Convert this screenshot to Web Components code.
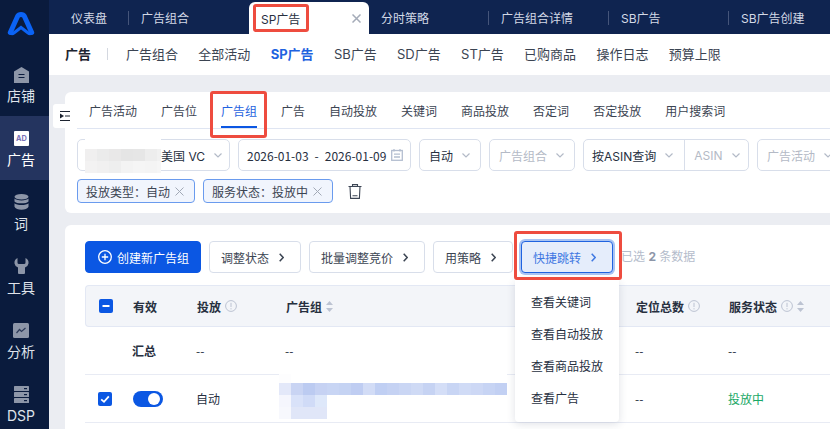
<!DOCTYPE html>
<html lang="zh"><head><meta charset="utf-8"><title>SP广告</title>
<style>
html,body{margin:0;padding:0;width:830px;height:429px;overflow:hidden;background:#ebedf2;font-family:Inter,"Noto Sans CJK SC",sans-serif;font-size:12px;color:#27303f}
</style></head><body>
<x-app>
  <x-sidebar slot="side">
    <svg slot="logo" width="28" height="24" viewBox="0 0 28 24"><path d="M3.300 20.500 10.600 4.300Q11.600 2.500 14 2.500T17.400 4.300L24.700 20.500" fill="none" stroke="#0b63f5" stroke-width="5" stroke-linecap="round"/><path d="M3.300 21Q5 22.500 7.500 20.500L14 15.500 20.500 20.500Q23 22.500 24.700 21" fill="none" stroke="#0b63f5" stroke-width="3"/></svg>
    <x-side-item label="店铺"><svg width="15" height="16" viewBox="0 0 15 16"><path d="M7.500 0 15 4.500V16H0V4.500Z" fill="#8d96a8"/><path d="M4.500 7.500h6M4.500 10.500h6" stroke="#0a1b3d" stroke-width="1.200"/></svg></x-side-item>
    <x-side-item label="广告" active><svg width="15" height="15" viewBox="0 0 15 15"><rect width="15" height="15" rx="1" fill="#fff"/><text x="7.500" y="10.400" font-family="Inter,sans-serif" font-size="7.400" font-weight="700" text-anchor="middle" fill="#7a72b8">AD</text></svg></x-side-item>
    <x-side-item label="词"><svg style="margin-top:-1px" width="15" height="16" viewBox="0 0 15 16"><g fill="#8d96a8"><ellipse cx="7.500" cy="2.800" rx="7" ry="2.800"/><path d="M.5 4.600C2 7 13 7 14.500 4.600V7.400C13 10 2 10 .5 7.400Z"/><path d="M.5 9.200C2 11.600 13 11.600 14.500 9.200V12.800C13 16.600 2 16.600 .5 12.800Z"/></g></svg></x-side-item>
    <x-side-item label="工具"><svg style="margin-top:-1px" width="15" height="16" viewBox="0 0 15 16"><path d="M3.500 0 V4.500 Q3.500 6 5 6 H10 Q11.500 6 11.500 4.500 V0 Q15 1.500 14.500 5.500 Q14 8.500 11 9.500 V15 Q11 16 10 16 H5 Q4 16 4 15 V9.500 Q1 8.500 .5 5.500 Q0 1.500 3.500 0Z" fill="#8d96a8"/></svg></x-side-item>
    <x-side-item label="分析"><svg width="16" height="15" viewBox="0 0 16 15"><rect width="16" height="15" rx="1.500" fill="#8d96a8"/><path d="M3.500 10 6.500 6.500 8.500 8.500 12.500 5" fill="none" stroke="#2c3a58" stroke-width="1.200"/></svg></x-side-item>
    <x-side-item label="DSP"><svg style="margin-top:-1px" width="15" height="17" viewBox="0 0 15 17"><g fill="#8d96a8"><rect width="15" height="5" rx=".6"/><rect y="6" width="15" height="5" rx=".6"/><rect y="12" width="15" height="5" rx=".6"/></g><g fill="#0a1b3d"><rect x="10" y="2" width="3" height="1.200"/><rect x="10" y="8" width="3" height="1.200"/><rect x="10" y="14" width="3" height="1.200"/></g></svg></x-side-item>
  </x-sidebar>
  <x-tabbar slot="tabs">
    <x-tab w="70" divider>仪表盘</x-tab>
    <x-tab w="120">广告组合</x-tab>
    <x-tab w="120" active>SP广告</x-tab>
    <x-tab w="120" divider>分时策略</x-tab>
    <x-tab w="120" divider>广告组合详情</x-tab>
    <x-tab w="120" divider>SB广告</x-tab>
    <x-tab w="120">SB广告创建</x-tab>
  </x-tabbar>
  <x-subnav slot="sub">
    <x-sub-link strong>广告</x-sub-link><x-sep></x-sep>
    <x-sub-link>广告组合</x-sub-link><x-sub-link>全部活动</x-sub-link><x-sub-link active>SP广告</x-sub-link><x-sub-link>SB广告</x-sub-link><x-sub-link>SD广告</x-sub-link><x-sub-link>ST广告</x-sub-link><x-sub-link>已购商品</x-sub-link><x-sub-link>操作日志</x-sub-link><x-sub-link>预算上限</x-sub-link>
  </x-subnav>
  <x-content slot="content">
    <x-card pad="0 12px 10px 12px">
      <x-line-tabs>
        <x-line-tab>广告活动</x-line-tab><x-line-tab>广告位</x-line-tab><x-line-tab active>广告组</x-line-tab><x-line-tab>广告</x-line-tab><x-line-tab>自动投放</x-line-tab><x-line-tab>关键词</x-line-tab><x-line-tab>商品投放</x-line-tab><x-line-tab>否定词</x-line-tab><x-line-tab>否定投放</x-line-tab><x-line-tab>用户搜索词</x-line-tab>
      </x-line-tabs>
      <x-row-flex style="margin-top:10px">
        <x-select w="153" pad="7"><x-mosaic size="12" clip="76" cells="fff,fff,fff,fff,fff,fff,fff;f0efef,ebebeb,e9e8e8,e5e5e5,e6e6e6,ededed,f1f1f1;f3f2f2,f1f0f0,eeeeee,f3f3f3,f5f5f5,f4f4f4,f6f6f6"></x-mosaic><span>美国 VC</span></x-select>
        <x-select w="173" kind="date"><x-date-range><span>2026-01-03</span><span>-</span><span>2026-01-09</span></x-date-range></x-select>
        <x-select w="62">自动</x-select>
        <x-select w="86" muted>广告组合</x-select>
        <x-select w="166" kind="split"><span>按ASIN查询</span><span slot="second">ASIN</span></x-select>
        <x-select w="110" muted>广告活动</x-select>
      </x-row-flex>
      <x-row-flex style="margin-top:8px">
        <x-tag w="118">投放类型：自动</x-tag>
        <x-tag w="130">服务状态：投放中</x-tag>
        <svg style="margin-left:7px;margin-top:5px" width="14" height="15" viewBox="0 0 14 15" fill="none" stroke="#3c4554" stroke-width="1.100"><path d="M.5 2.500H13.500M4.500 2.500V.6H9.500V2.500M2 2.500 2.600 14.400H11.400L12 2.500M4.500 11.800H9.500"/></svg>
      </x-row-flex>
    </x-card>
    <x-card pad="16px 0 0 20px" style="margin-top:12px;height:240px">
      <x-row-flex>
        <x-btn primary w="116"><svg width="14" height="14" viewBox="0 0 14 14" fill="none" stroke="#fff" stroke-width="1.300" style="margin-right:5px"><circle cx="7" cy="7" r="6.300"/><path d="M3.800 7h6.400M7 3.800v6.400"/></svg>创建新广告组</x-btn>
        <x-btn w="92" arrow>调整状态</x-btn>
        <x-btn w="116" arrow>批量调整竞价</x-btn>
        <x-btn w="80" arrow>用策略</x-btn>
        <x-btn w="92" arrow focus>快捷跳转</x-btn>
        <span style="margin:8px 0 0 0;color:#b4bccb;line-height:16px">已选 <b style="color:#8d96a8">2</b> 条数据</span>
      </x-row-flex>
      <x-grid-table>
        <x-table-row head>
          <x-check state="minus"></x-check><b>有效</b><b>投放<x-info></x-info></b><b>广告组<x-sort></x-sort></b><b>定位总数<x-info></x-info></b><b>服务状态<x-info></x-info><x-sort></x-sort></b>
        </x-table-row>
        <x-table-row h="48">
          <span></span><b>汇总</b><x-dash></x-dash><x-dash></x-dash><x-dash></x-dash><x-dash></x-dash>
        </x-table-row>
        <x-table-row h="48">
          <x-check state="on"></x-check><x-switch></x-switch><span>自动</span><span></span><x-dash></x-dash><span style="color:#19a866">投放中</span>
          <x-mosaic slot="over" size="12" first="9" cells="fdfdfe,fff,fff,fff,fff,fff,fff,fff,fff,fff,fff,fff,fff,fff,fff,fff,fff,fff,fff;e3e8f9,c9d4f3,bccbf1,c6d2f3,c8d5f4,c5d3f3,bfcdf2,d2dcf6,c0cff3,c5d2f3,cad6f4,cfdaf5,c6d3f3,d4def7,c8d5f4,d0dbf6,cdd8f5,c7d4f4,c2d0f3;f5f6fd,d9e2f9,d0dbf7,dee8fa,fff,fff,fff,fff,fff,fff,fff,fff,fff,fff,fff,fff,fff,fff,fff;f7f8fd,e0e6f8,e0e6f8,e0e6f8,fff,fff,fff,fff,fff,fff,fff,fff,fff,fff,fff,fff,fff,fff,fff"></x-mosaic>
        </x-table-row>
      </x-grid-table>
      <x-menu>
        <x-menu-item>查看关键词</x-menu-item><x-menu-item>查看自动投放</x-menu-item><x-menu-item>查看商品投放</x-menu-item><x-menu-item>查看广告</x-menu-item>
      </x-menu>
    </x-card>
    <x-collapse></x-collapse>
  </x-content>
  <x-mark slot="marks" box="253,4,56,28"></x-mark>
  <x-mark slot="marks" box="210,91,57,47"></x-mark>
  <x-mark slot="marks" box="514,231,108,49"></x-mark>
</x-app>
<script>
function def(name,html,init){
  customElements.define(name,class extends HTMLElement{
    constructor(){super();this.attachShadow({mode:'open'}).innerHTML=typeof html==='function'?html(this):html;}
    connectedCallback(){if(init)init(this,this.shadowRoot);}
  });
}
const chev=c=>`<svg width="8" height="5" viewBox="0 0 8 5" fill="none" stroke="${c}" stroke-width="1.200"><path d="M.5.5 4 4 7.500.5"/></svg>`;
const arrow=c=>`<svg width="5" height="9" viewBox="0 0 5 9" fill="none" stroke="${c}" stroke-width="1.500"><path d="M.7.7 4.200 4.500.7 8.300"/></svg>`;
def('x-app',`<style>:host{display:grid;grid-template-columns:49px 781px;grid-template-rows:34px 41px 354px;width:830px;height:429px;position:relative;overflow:hidden}
::slotted([slot=side]){grid-row:1/4}
::slotted([slot=marks]){position:absolute}</style>
<slot name="side"></slot><slot name="tabs"></slot><slot name="sub"></slot><slot name="content"></slot><slot name="marks"></slot>`);
def('x-sidebar',`<style>:host{display:flex;flex-direction:column;background:#0a1b3d;height:429px;overflow:hidden}
.l{height:52px;flex:none;display:flex;justify-content:center;padding:12px 7px 0 0;box-sizing:border-box}</style>
<div class="l"><slot name="logo"></slot></div><slot></slot>`);
def('x-side-item',h=>`<style>:host{display:flex;flex-direction:column;align-items:center;height:64px;box-sizing:border-box;padding:15px 7px 0 0;flex:none;color:#dfe3ea;font-size:14px}
:host([active]){background:#24345f;color:#fff}
.i{height:17px;display:flex}
.t{line-height:20px;margin-top:2px}</style><div class="i"><slot></slot></div><div class="t">${h.getAttribute('label')}</div>`);
def('x-tabbar',`<style>:host{display:flex;background:#0f2450;height:34px;padding-left:10px;overflow:hidden}</style><slot></slot>`);
def('x-tab',h=>`<style>:host{display:flex;align-items:center;box-sizing:border-box;width:${h.getAttribute('w')}px;padding:0 12px;height:34px;color:#d3d9e6;font-size:12px;position:relative;flex:none}
:host([divider])::after{content:"";position:absolute;right:0;top:11px;height:14px;width:1px;background:#45557a}
:host([active]){background:#fff;color:#27303f;border-radius:6px 6px 0 0;height:32px;margin-top:2px;padding-right:8px}
.x{display:none;margin-left:auto}
:host([active]) .x{display:block}</style><slot></slot><svg class="x" width="9" height="9" viewBox="0 0 9 9" stroke="#a4abb8" stroke-width="1.500"><path d="M.5.5l8 8M8.500.5l-8 8"/></svg>`);
def('x-subnav',`<style>:host{display:flex;align-items:center;gap:20.300px;background:#fff;height:41px;padding:0 0 2px 16px;box-sizing:border-box;overflow:hidden}</style><slot></slot>`);
def('x-sub-link',`<style>:host{font-size:13px;color:#3b4452;white-space:nowrap}
:host([strong]){font-weight:700;color:#1d2430}
:host([active]){font-weight:700;color:#1f63e0}</style><slot></slot>`);
def('x-sep',`<style>:host{display:block;width:1px;height:12px;background:#d4d8e0;margin:0 -2.300px 0 -4.300px}</style>`);
def('x-content',`<style>:host{display:block;padding:17px 0 0 16px;position:relative;overflow:hidden;background:#ebedf2;height:354px;box-sizing:border-box}
::slotted(x-collapse){position:absolute;left:4px;top:29px}</style><slot></slot>`);
def('x-card',h=>`<style>:host{display:block;background:#fff;border-radius:6px 0 0 6px;padding:${h.getAttribute('pad')};position:relative;width:765px;overflow:hidden;box-sizing:border-box}
::slotted(x-menu){position:absolute;left:450px;top:55px}</style><slot></slot>`);
def('x-line-tabs',`<style>:host{display:flex;gap:24px;height:36px;padding-left:12px;border-bottom:1px solid #dfe5f2;margin-right:-12px;width:800px}</style><slot></slot>`);
def('x-line-tab',`<style>:host{display:flex;align-items:center;height:36px;font-size:12px;color:#3b4452;box-sizing:border-box;white-space:nowrap;padding-top:1px}
:host([active]){color:#1f63e0;border-bottom:2px solid #0b57e3;padding-top:3px}</style><slot></slot>`);
def('x-row-flex',`<style>:host{display:flex;gap:8px;width:830px}</style><slot></slot>`);
def('x-date-range',`<style>:host{display:flex;gap:6px;width:137px;justify-content:space-between;font-family:"Noto Sans CJK SC",sans-serif;font-size:12px;color:#27303f}</style><slot></slot>`);
def('x-select',h=>{const k=h.getAttribute('kind');const w=h.getAttribute('w');
 const icon=k==='date'?`<svg style="margin-left:auto" width="12" height="12" viewBox="0 0 12 12" fill="none" stroke="#b4bed0" stroke-width="1.300"><rect x=".7" y="1.500" width="10.600" height="9.800"/><path d="M3 0v2.500M9 0v2.500M3 5.200h6M3 8h6"/></svg>`:`<span class="c">${chev('#b3bac7')}</span>`;
 const second=k==='split'?`<span class="s"><slot name="second"></slot><span class="c">${chev('#b3bac7')}</span></span>`:'';
 const left=k==='date'?'0 7px 0 8px':k==='split'?'0 9px 0 8px':h.hasAttribute('pad')?'0 7px':'0 9px';
 return `<style>:host{display:flex;align-items:center;box-sizing:border-box;flex:none;width:${w}px;height:32px;border:1px solid #d8deea;border-radius:5px;padding:${left};font-size:12px;color:#27303f;white-space:nowrap;background:#fff}
:host([muted]){color:#b4bac6}
.c{margin-left:9px;display:flex}
.s{display:flex;align-items:center;align-self:stretch;margin-left:11px;padding-left:9px;border-left:1px solid #d8deea;color:#b4bac6}</style><slot></slot>${icon}${second}`;});
def('x-tag',h=>`<style>:host{display:flex;align-items:center;box-sizing:border-box;width:${h.getAttribute('w')}px;height:24px;border:1px solid #6a9bee;border-radius:4px;background:#f1f5fd;padding-left:8px;font-size:12px;color:#3b4452;white-space:nowrap}
svg{margin-left:5px}</style><slot></slot><svg width="9" height="9" viewBox="0 0 9 9" stroke="#a2a9b6" stroke-width="1"><path d="M.5.5l8 8M8.500.5l-8 8"/></svg>`);
def('x-btn',h=>`<style>:host{display:flex;align-items:center;box-sizing:border-box;width:${h.getAttribute('w')}px;height:32px;flex:none;border:1px solid #d8deea;border-radius:4px;background:#fff;padding-left:11px;font-size:12px;color:#3b4452;white-space:nowrap}
:host([primary]){background:#0b57e3;border-color:#0b57e3;color:#fff;padding-left:12px}
:host([focus]){background:#e5edfb;border-color:#1f63e0;color:#3f78e2;box-shadow:0 0 0 2px #a9c4f3}
.a{margin-left:10px;display:flex}</style><slot></slot>${h.hasAttribute('arrow')?`<span class="a">${arrow(h.hasAttribute('focus')?'#3f78e2':'#3b4452')}</span>`:''}`);
def('x-grid-table',`<style>:host{display:block;margin-top:12px;width:760px}</style><slot></slot>`);
def('x-table-row',h=>`<style>:host{display:grid;grid-template-columns:47px 64px 89px 350px 93px 120px;align-items:center;box-sizing:border-box;height:${h.getAttribute('h')||42}px;border-bottom:1px solid #e8ebf4;position:relative;font-size:12px;color:#27303f;width:760px}
:host([head]){background:#f3f5f9;border:1px solid #e3e8f4;border-right:0;border-radius:4px 0 0 4px}
:host([head]) ::slotted(b){display:flex;align-items:center;color:#27303f;font-weight:600}
::slotted(b){font-weight:600}
::slotted([slot=over]){position:absolute!important;left:194px;top:-1px}</style><slot></slot><slot name="over"></slot>`);
def('x-check',h=>{const s=h.getAttribute('state');return `<style>:host{display:block;width:14px;height:14px;margin-left:13px;background:#0b57e3;border-radius:2px}svg{display:block}</style>
<svg width="14" height="14" viewBox="0 0 14 14" fill="none" stroke="#fff" stroke-width="${s==='on'?1.800:2}"><path d="${s==='on'?'M3.200 7.300 6 9.800 10.800 4.400':'M3.500 7h7'}"/></svg>`;});
def('x-dash',`<style>:host{display:block;font-family:"Noto Sans CJK SC",sans-serif;font-size:12px}</style>--`);
def('x-switch',`<style>:host{display:block;width:30px;height:16px;margin-left:1px;border-radius:8px;background:#0b57e3;position:relative}
i{position:absolute;right:3px;top:2px;width:12px;height:12px;border-radius:50%;background:#fff}</style><i></i>`);
def('x-info',`<style>:host{display:inline-flex;margin-left:4px;font-weight:400}</style><svg width="12" height="12" viewBox="0 0 12 12" fill="none" stroke="#bcc3d2" stroke-width="1"><circle cx="6" cy="6" r="5.400"/><path d="M6 2.800v4.200M6 8.200v1.200"/></svg>`);
def('x-sort',`<style>:host{display:inline-flex;margin-left:4px}</style><svg width="7" height="11" viewBox="0 0 7 11" fill="#bcc3d2"><path d="M3.500 0 7 4H0ZM3.500 11 0 7H7Z"/></svg>`);
def('x-menu',`<style>:host{display:block;width:104px;height:142px;box-sizing:border-box;padding:5px 0 0 16px;background:#fff;border-radius:0 0 4px 4px;box-shadow:0 2px 8px rgba(40,55,90,.15)}</style><slot></slot>`);
def('x-menu-item',`<style>:host{display:flex;align-items:center;height:32px;font-size:12px;color:#27303f;white-space:nowrap}</style><slot></slot>`);
def('x-collapse',`<style>:host{display:flex;align-items:center;justify-content:flex-end;width:17px;height:24px;background:#fff;border-radius:3px 0 0 3px;position:absolute}</style><svg width="10" height="10" viewBox="0 0 10 10"><path d="M0 .5H10M0 9.500H10" stroke="#1d2430"/><path d="M0 2.500v5L4 5Z" fill="#1d2430"/><path d="M5 5H10" stroke="#1d2430"/></svg>`);
def('x-mosaic',h=>{const n=+h.getAttribute('size');const rows=h.getAttribute('cells').split(';').map(r=>r.split(','));const f=h.getAttribute('first');const c=h.getAttribute('clip');
 const hs=rows.map((r,i)=>i==0&&f?f+'px':n+'px').join(' ');
 return `<style>:host{display:inline-grid;grid-template-columns:repeat(${rows[0].length},${n}px);grid-template-rows:${hs};flex:none;overflow:hidden;${c?'width:'+c+'px':''}}</style>`+rows.flat().map(c=>`<i style="background:#${c}"></i>`).join('');});
def('x-mark',`<style>:host{display:block;box-sizing:border-box;border:3px solid #ee4c3f;border-radius:3px;pointer-events:none}</style>`,h=>{const [x,y,w,t]=h.getAttribute('box').split(',');Object.assign(h.style,{left:x+'px',top:y+'px',width:w+'px',height:t+'px'});});
</script>
</body></html>
